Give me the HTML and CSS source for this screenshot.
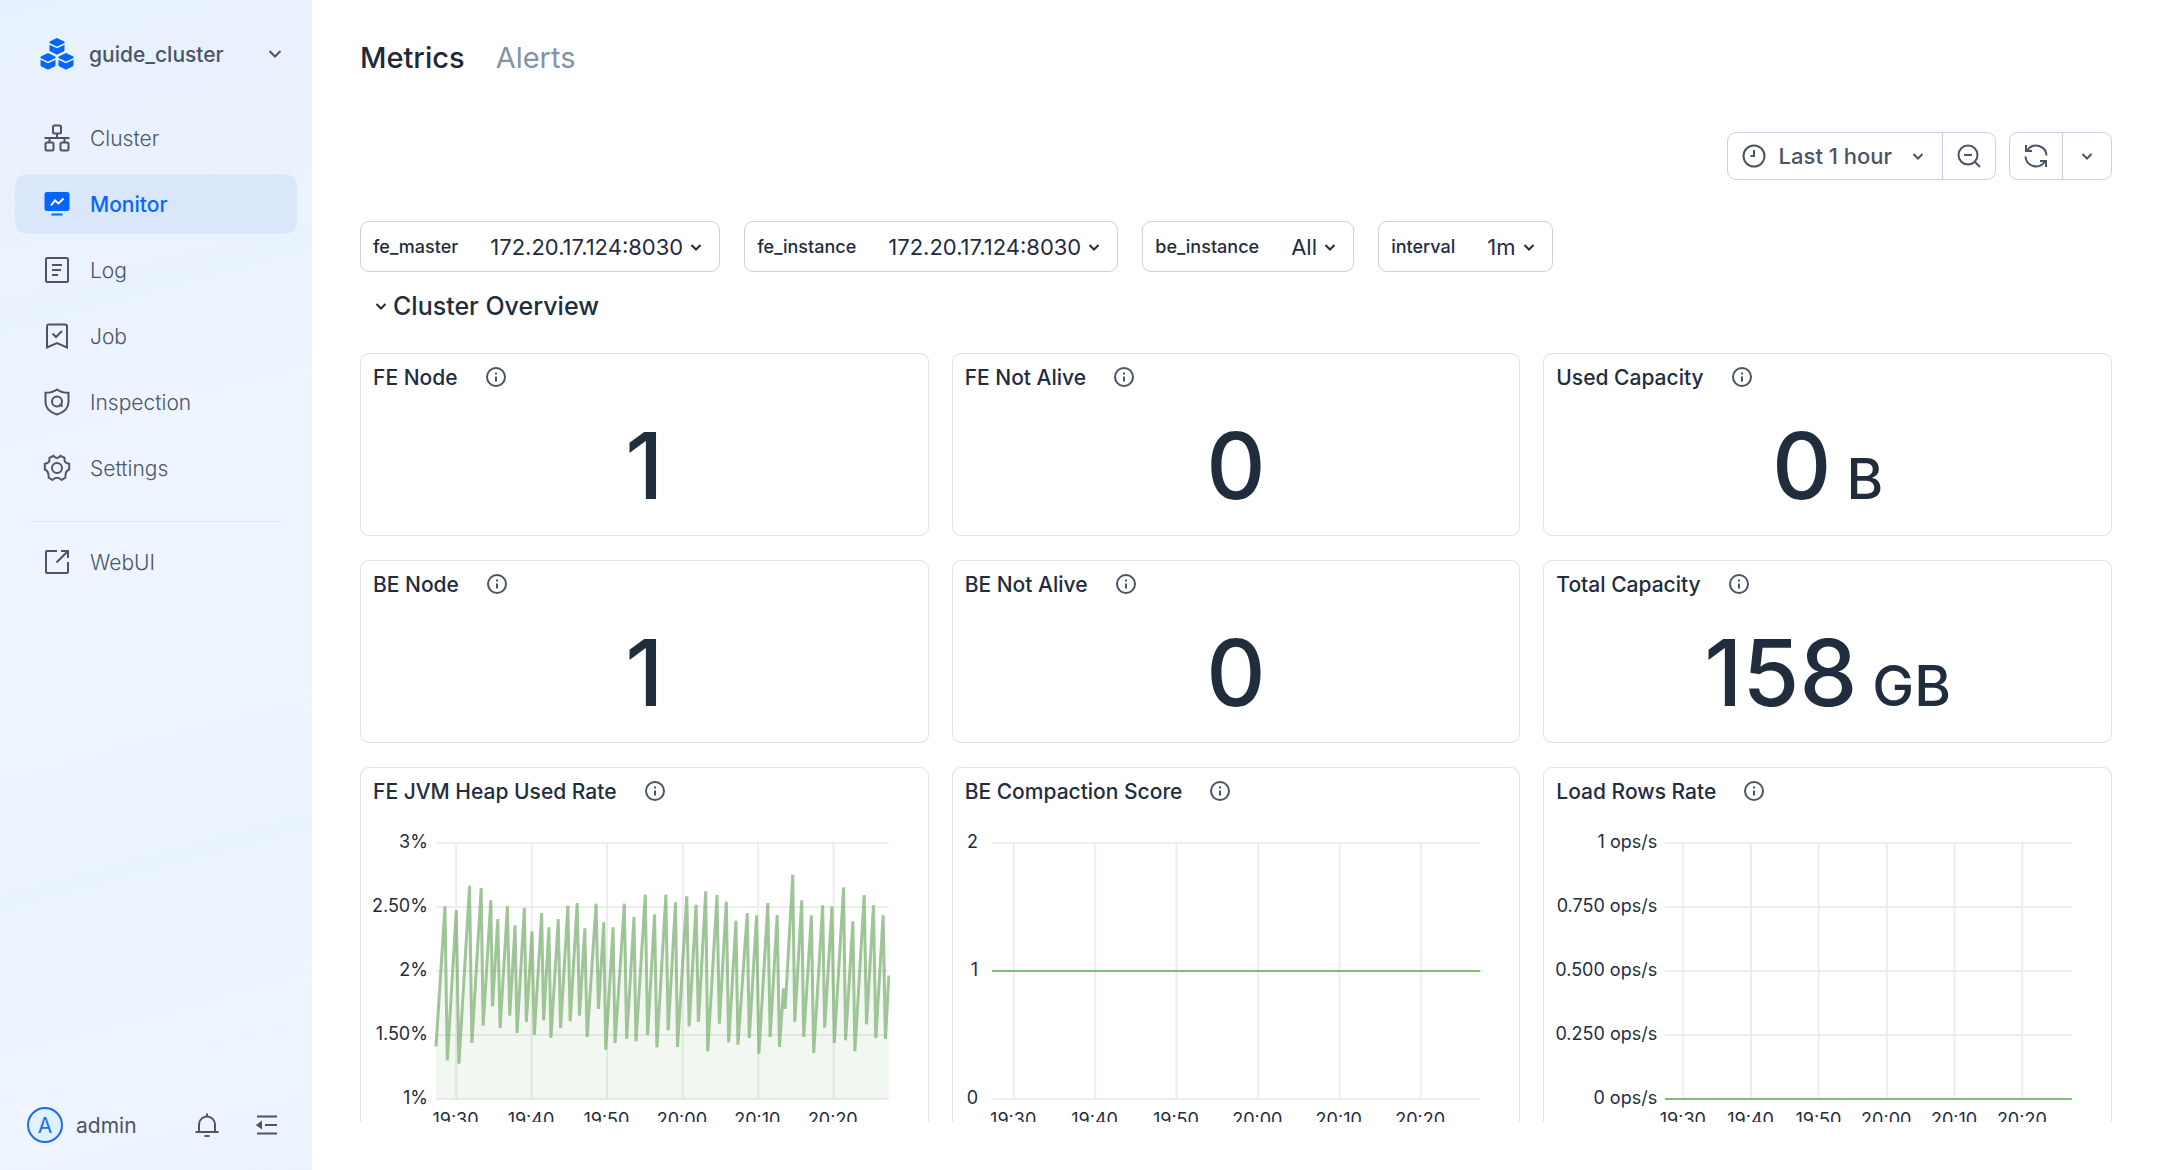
FILE: index.html
```html
<!DOCTYPE html>
<html lang="en">
    <head>
        <meta charset="utf-8">
        <meta name="viewport" content="width=device-width"/>
        <title>Metrics</title>
        <link rel="stylesheet" href="styles.css">
    </head>
    <body>
        <!-- shared icons -->
        <svg class="sprite" aria-hidden="true">
            <symbol id="down" viewBox="0 0 12 12"><path d="M1.5 4L6 8.5L10.5 4"/></symbol>
            <symbol id="info" viewBox="0 0 20 20">
                <circle cx="10" cy="10" r="9"/>
                <path d="M10 9.5v5M10 5.5v2"/>
            </symbol>
        </svg>

        <aside class="sidebar">
            <button class="cluster-switch" type="button">
                <svg class="logo" viewBox="0 0 34 32">
                    <g id="cube">
                        <path d="M17 0L23.8 3.3Q24.5 3.7 24.5 4.500V12Q24.5 12.800 23.8 13.200L17 16.800L10.2 13.200Q9.5 12.800 9.5 12V4.500Q9.5 3.700 10.2 3.300Z"/>
                        <path class="edge" d="M9 5.800L17 9.400L25 5.800"/>
                    </g>
                    <use href="#cube" x="-9" y="15"/>
                    <use href="#cube" x="9" y="15"/>
                </svg>
                <span>guide_cluster</span>
                <svg class="icon switch-arrow" viewBox="0 0 14 14"><path d="M1.5 4L7 9.5L12.5 4"/></svg>
            </button>

            <nav class="menu">
                <a class="menu-item" href="#cluster">
                    <svg class="icon" viewBox="0 0 28 28"><rect x="10" y="1.5" width="8" height="8" rx="1.5"/><rect x="2.5" y="18.5" width="8" height="8" rx="1.5"/><rect x="17.5" y="18.5" width="8" height="8" rx="1.5"/><path d="M14 9.5v4.500M1.500 14h25M6.500 14v4.500M21.500 14v4.500"/></svg>
                    Cluster
                </a>
                <a class="menu-item active" href="#monitor" aria-current="page">
                    <svg class="icon" viewBox="0 0 28 28"><rect class="solid" x="2.500" y="3" width="23" height="17" rx="1.500"/><path class="edge" d="M8 15.500L12 10.500L15.500 13.500L20.500 8.500"/><path d="M8.500 24.500h11"/></svg>
                    Monitor
                </a>
                <a class="menu-item" href="#log">
                    <svg class="icon" viewBox="0 0 28 28"><rect x="3" y="2" width="22" height="24" rx="1.500"/><path d="M9 9h10M9 14h9M9 19h6"/></svg>
                    Log
                </a>
                <a class="menu-item" href="#job">
                    <svg class="icon" viewBox="0 0 28 28"><path d="M4 25.500V4.500Q4 2.500 6 2.500H22Q24 2.500 24 4.500V25.500L14 21Z"/><path d="M9.500 11.500L13 15L19 9"/></svg>
                    Job
                </a>
                <a class="menu-item" href="#inspection">
                    <svg class="icon" viewBox="0 0 28 28"><path d="M14 1.500C17 3.800 21 4.800 25.500 4.800V14C25.500 20 20.500 24.500 14 26.500C7.500 24.500 2.500 20 2.500 14V4.800C7 4.800 11 3.800 14 1.500Z"/><circle cx="14" cy="13.500" r="5"/><path d="M16.500 16L19.500 18.500"/></svg>
                    Inspection
                </a>
                <a class="menu-item" href="#settings">
                    <svg class="icon" viewBox="0 0 28 28"><path d="M10.500 1.800Q12 4 14 4T17.500 1.800L21.500 3.800Q21.200 6.600 22.200 8T26.200 9.800V15.500Q24.400 15.900 23.300 18T22.300 23.600L18.500 26Q16.800 23.800 14 23.800T9.500 26L5.700 23.600Q5.800 20 4.700 18T1.800 15.500V9.800Q4.800 9.400 5.800 8T6.500 3.800Z"/><circle cx="14" cy="14" r="5"/></svg>
                    Settings
                </a>
                <hr class="menu-line">
                <a class="menu-item" href="#webui">
                    <svg class="icon" viewBox="0 0 28 28"><path d="M14 3H4Q3 3 3 4V24Q3 25 4 25H24Q25 25 25 24V14"/><path d="M18 3h7v7M25 3L13.500 14.500"/></svg>
                    WebUI
                </a>
            </nav>

            <div class="user-bar">
                <span class="avatar">A</span>
                <span class="user-name">admin</span>
                <button type="button" aria-label="Notifications">
                    <svg class="icon" viewBox="0 0 26 26"><path d="M5 20V12.500A8 8 0 0 1 21 12.500V20M1.500 20H24.500M13 1.500V4.500M10.500 24h5"/></svg>
                </button>
                <button type="button" aria-label="Collapse menu">
                    <svg class="icon" viewBox="0 0 26 26"><path d="M3 4.500H23M11 13H23M3 21.500H23"/><path class="solid" d="M3.500 13L7 10.500V15.500Z"/></svg>
                </button>
            </div>
        </aside>

        <main class="main">
            <nav class="tabs">
                <a class="tab active" href="#metrics" aria-current="page">Metrics</a>
                <a class="tab" href="#alerts">Alerts</a>
            </nav>

            <div class="toolbar">
                <div class="button-group">
                    <button type="button">
                        <svg class="icon" viewBox="0 0 24 24"><circle cx="12" cy="12" r="10.500"/><path d="M12 6v6H8.500"/></svg>
                        <span>Last 1 hour</span>
                        <svg class="icon arrow"><use href="#down"/></svg>
                    </button>
                    <button type="button" aria-label="Zoom out">
                        <svg class="icon" viewBox="0 0 24 24"><circle cx="11" cy="11" r="9.500"/><path d="M7 11h8M18 18L23 23"/></svg>
                    </button>
                </div>
                <div class="button-group">
                    <button type="button" aria-label="Refresh">
                        <svg class="icon" viewBox="0 0 24 24"><path d="M22.500 11.500A10.500 10.500 0 0 0 3.500 6M2 1v6h6M1.500 12.500A10.500 10.500 0 0 0 20.500 18M22 23v-6h-6"/></svg>
                    </button>
                    <button type="button" aria-label="Refresh interval">
                        <svg class="icon arrow"><use href="#down"/></svg>
                    </button>
                </div>
            </div>

            <form class="filters">
                <div class="filter">
                    <label for="fe_master">fe_master</label>
                    <select id="fe_master"><option>172.20.17.124:8030</option></select>
                    <svg class="icon arrow"><use href="#down"/></svg>
                </div>
                <div class="filter">
                    <label for="fe_instance">fe_instance</label>
                    <select id="fe_instance"><option>172.20.17.124:8030</option></select>
                    <svg class="icon arrow"><use href="#down"/></svg>
                </div>
                <div class="filter">
                    <label for="be_instance">be_instance</label>
                    <select id="be_instance"><option>All</option></select>
                    <svg class="icon arrow"><use href="#down"/></svg>
                </div>
                <div class="filter">
                    <label for="interval">interval</label>
                    <select id="interval"><option>1m</option></select>
                    <svg class="icon arrow"><use href="#down"/></svg>
                </div>
            </form>

            <h2 class="section-title">
                <button type="button">
                    <svg class="icon arrow"><use href="#down"/></svg>
                    Cluster Overview
                </button>
            </h2>

            <div class="panels">
                <section class="panel">
                    <h3>FE Node <svg class="icon info"><use href="#info"/></svg></h3>
                    <p class="value">1</p>
                </section>
                <section class="panel">
                    <h3>FE Not Alive <svg class="icon info"><use href="#info"/></svg></h3>
                    <p class="value">0</p>
                </section>
                <section class="panel">
                    <h3>Used Capacity <svg class="icon info"><use href="#info"/></svg></h3>
                    <p class="value">0<small>B</small></p>
                </section>
                <section class="panel">
                    <h3>BE Node <svg class="icon info"><use href="#info"/></svg></h3>
                    <p class="value">1</p>
                </section>
                <section class="panel">
                    <h3>BE Not Alive <svg class="icon info"><use href="#info"/></svg></h3>
                    <p class="value">0</p>
                </section>
                <section class="panel">
                    <h3>Total Capacity <svg class="icon info"><use href="#info"/></svg></h3>
                    <p class="value">158<small>GB</small></p>
                </section>

                <section class="panel">
                    <h3>FE JVM Heap Used Rate <svg class="icon info"><use href="#info"/></svg></h3>
                    <div class="chart">
                        <div class="y-axis"><span>3%</span><span>2.50%</span><span>2%</span><span>1.50%</span><span>1%</span></div>
                        <svg class="plot" viewBox="0 0 1363 768" preserveAspectRatio="none">
                            <path class="grid" d="M0 0H1363M0 192H1363M0 384H1363M0 576H1363M0 768H1363M61 0V768M288 0V768M515 0V768M743 0V768M970 0V768M1197 0V768"/>
                            <path class="area" d="M0 768L0 610L27 190L34 652L61 202L69 662L101 128L108 600L136 135L142 548L165 172L170 490L186 228L193 555L215 190L222 518L238 247L244 570L266 195L272 537L289 265L296 576L318 210L324 532L340 253L346 585L368 228L375 555L397 188L404 535L425 180L432 518L448 256L455 582L482 182L489 498L505 238L511 620L533 253L539 600L567 182L574 588L596 222L602 595L630 155L637 576L658 214L665 613L692 155L699 562L721 178L727 612L755 160L762 550L783 185L790 537L812 145L818 625L846 156L853 542L874 176L881 598L903 233L909 605L937 210L943 585L965 217L972 632L999 180L1006 582L1027 216L1034 612L1046 436L1051 498L1074 95L1080 536L1101 172L1107 582L1130 217L1137 630L1164 187L1170 554L1192 190L1199 600L1227 133L1233 592L1255 235L1261 625L1289 156L1296 544L1317 187L1324 585L1346 217L1353 588L1363 398V768Z"/>
                            <path class="line" d="M0 610L27 190L34 652L61 202L69 662L101 128L108 600L136 135L142 548L165 172L170 490L186 228L193 555L215 190L222 518L238 247L244 570L266 195L272 537L289 265L296 576L318 210L324 532L340 253L346 585L368 228L375 555L397 188L404 535L425 180L432 518L448 256L455 582L482 182L489 498L505 238L511 620L533 253L539 600L567 182L574 588L596 222L602 595L630 155L637 576L658 214L665 613L692 155L699 562L721 178L727 612L755 160L762 550L783 185L790 537L812 145L818 625L846 156L853 542L874 176L881 598L903 233L909 605L937 210L943 585L965 217L972 632L999 180L1006 582L1027 216L1034 612L1046 436L1051 498L1074 95L1080 536L1101 172L1107 582L1130 217L1137 630L1164 187L1170 554L1192 190L1199 600L1227 133L1233 592L1255 235L1261 625L1289 156L1296 544L1317 187L1324 585L1346 217L1353 588L1363 398"/>
                        </svg>
                        <div class="x-axis"><span>19:30</span><span>19:40</span><span>19:50</span><span>20:00</span><span>20:10</span><span>20:20</span></div>
                    </div>
                </section>
                <section class="panel">
                    <h3>BE Compaction Score <svg class="icon info"><use href="#info"/></svg></h3>
                    <div class="chart">
                        <div class="y-axis short"><span>2</span><span>1</span><span>0</span></div>
                        <svg class="plot" viewBox="0 0 1363 768" preserveAspectRatio="none">
                            <path class="grid" d="M0 0H1363M0 384H1363M0 768H1363M61 0V768M288 0V768M515 0V768M743 0V768M970 0V768M1197 0V768"/>
                            <path class="line flat" d="M0 384H1363"/>
                        </svg>
                        <div class="x-axis"><span>19:30</span><span>19:40</span><span>19:50</span><span>20:00</span><span>20:10</span><span>20:20</span></div>
                    </div>
                </section>
                <section class="panel">
                    <h3>Load Rows Rate <svg class="icon info"><use href="#info"/></svg></h3>
                    <div class="chart">
                        <div class="y-axis"><span>1 ops/s</span><span>0.750 ops/s</span><span>0.500 ops/s</span><span>0.250 ops/s</span><span>0 ops/s</span></div>
                        <svg class="plot" viewBox="0 0 1363 768" preserveAspectRatio="none">
                            <path class="grid" d="M0 0H1363M0 192H1363M0 384H1363M0 576H1363M0 768H1363M61 0V768M288 0V768M515 0V768M743 0V768M970 0V768M1197 0V768"/>
                            <path class="line flat" d="M0 768H1363"/>
                        </svg>
                        <div class="x-axis"><span>19:30</span><span>19:40</span><span>19:50</span><span>20:00</span><span>20:10</span><span>20:20</span></div>
                    </div>
                </section>
            </div>
        </main>
    </body>
</html>
```

FILE: styles.css
```css
* {
    box-sizing: border-box;
}
body {
    display: flex;
    height: 100vh;
    margin: 0;
    background: #fff;
    color: #1f2d3d;
    font-family: Inter, "Liberation Sans", sans-serif;
    font-size: 22px;
}
h2, h3, p {
    margin: 0;
}
a {
    color: inherit;
    text-decoration: none;
}
button, select {
    padding: 0;
    border: 0;
    background: none;
    color: inherit;
    font: inherit;
    cursor: pointer;
}
.sprite {
    position: absolute;
    width: 0;
    height: 0;
}
.icon {
    flex: none;
    width: 28px;
    height: 28px;
    fill: none;
    stroke: currentColor;
    stroke-width: 2;
    overflow: visible;
}
.icon .solid {
    fill: currentColor;
}
.arrow {
    width: 12px;
    height: 12px;
}

/* sidebar */
.sidebar {
    display: flex;
    flex: none;
    flex-direction: column;
    width: 312px;
    background: linear-gradient(165deg, #e7f1fe 0%, #eaf2fd 18%, #e9f3fe 26%, #eff5ff 40%, #eff5ff 58%, #e9f3fe 72%, #eff5ff 90%, #eaf3fd 100%);
    color: #4b5565;
    font-size: 21px;
}
.cluster-switch {
    display: flex;
    align-items: center;
    gap: 15px;
    height: 108px;
    padding: 0 30px 0 40px;
    font-weight: 500;
    text-align: left;
}
.cluster-switch span {
    flex: 1;
}
.logo {
    width: 34px;
    height: 32px;
    fill: #0565ff;
}
.logo .edge {
    fill: none;
    stroke: #eaf2fd;
    stroke-width: 1.5;
}
.switch-arrow {
    width: 14px;
    height: 14px;
}
.menu {
    display: flex;
    flex: 1;
    flex-direction: column;
    gap: 6px;
    padding: 0 15px;
    font-weight: 300;
}
.menu-item {
    display: flex;
    align-items: center;
    gap: 19px;
    height: 60px;
    padding-left: 28px;
    border-radius: 12px;
}
.menu-item.active {
    background: #dae7fa;
    color: #0565ff;
    font-weight: 500;
}
.menu-item .edge {
    stroke: #fff;
}
.menu-line {
    width: 252px;
    margin: 17px auto 4px;
    border: 0;
    border-top: 1px solid #e0e6f0;
}
.user-bar {
    display: flex;
    align-items: center;
    gap: 13px;
    height: 90px;
    padding: 0 32px 0 27px;
}
.user-bar .icon {
    display: block;
    width: 26px;
    height: 26px;
}
.user-bar button + button {
    margin-left: 21px;
}
.avatar {
    display: flex;
    align-items: center;
    justify-content: center;
    width: 36px;
    height: 36px;
    border: 2px solid #1f6bf0;
    border-radius: 50%;
    background: #e0f1ff;
    color: #1f6bf0;
}
.user-name {
    flex: 1;
}

/* content */
.main {
    display: flex;
    flex: 1;
    flex-direction: column;
    min-width: 0;
    padding: 36px 48px 48px;
}
.tabs {
    display: flex;
    gap: 31px;
    height: 96px;
    font-size: 29px;
    line-height: 44px;
}
.tab {
    color: #8592a6;
}
.tab.active {
    color: #1f2937;
    font-weight: 500;
}
.toolbar {
    display: flex;
    justify-content: flex-end;
    gap: 13px;
    margin-bottom: 41px;
    color: #4a5465;
    font-weight: 500;
}
.button-group {
    display: flex;
    height: 48px;
    border: 1px solid #c8d1e3;
    border-radius: 9px;
}
.button-group button {
    display: flex;
    align-items: center;
    padding: 0 14px;
}
.button-group button + button {
    border-left: 1px solid #c8d1e3;
}
.button-group span {
    padding: 0 16px 0 13px;
}
.button-group .icon {
    width: 24px;
    height: 24px;
}
.button-group .arrow {
    width: 12px;
    height: 12px;
    margin: 0 4px;
}
.filters {
    display: flex;
    gap: 24px;
}
.filter {
    display: flex;
    align-items: center;
    height: 51px;
    padding: 0 17px 0 12px;
    border: 1px solid #c9d3df;
    border-radius: 9px;
}
.filter label {
    margin-right: 32px;
    font-size: 18px;
    font-weight: 500;
}
.filter select {
    margin-right: 7px;
    appearance: none;
}
.section-title {
    height: 81px;
    padding: 16px 0 0 15px;
    font-size: 25px;
    font-weight: 500;
    line-height: 36px;
}
.section-title button {
    display: flex;
    align-items: center;
    gap: 6px;
}
.panels {
    display: grid;
    flex: 1;
    grid-template-columns: repeat(3, 1fr);
    grid-template-rows: 183px 183px 384px;
    gap: 24px 23px;
    min-height: 0;
    overflow: hidden;
}
.panel {
    display: flex;
    flex-direction: column;
    border: 1px solid #dce2e7;
    border-radius: 9px;
}
.panel h3 {
    display: flex;
    flex: none;
    align-items: center;
    gap: 28px;
    height: 46px;
    padding-left: 12px;
    font-size: 21px;
    font-weight: 500;
}
.info {
    width: 20px;
    height: 20px;
    color: #4a5465;
}
.value {
    display: flex;
    align-items: baseline;
    justify-content: center;
    gap: 15px;
    font-size: 92px;
    font-weight: 500;
    line-height: 132px;
}
.value small {
    font-size: 56px;
    line-height: 56px;
}

/* charts: labels keep their size, the plot stretches */
.chart {
    display: grid;
    grid-template-columns: auto 1fr;
    grid-template-rows: 256px 40px;
    padding: 29px 39px 0 0;
    font-size: 18px;
    line-height: 20px;
}
.y-axis {
    display: flex;
    flex-direction: column;
    justify-content: space-between;
    margin: -11px 0 -9px;
    padding: 0 8px 0 11px;
    text-align: right;
}
.y-axis.short {
    padding: 0 14px;
}
.plot {
    width: 100%;
    height: 256px;
    overflow: visible;
}
.plot path {
    fill: none;
    vector-effect: non-scaling-stroke;
}
.plot .grid {
    stroke: #ededed;
    stroke-width: 2;
}
.plot .area {
    fill: #56a64b;
    fill-opacity: .08;
}
.plot .line {
    stroke: #6fa862;
    stroke-opacity: .65;
    stroke-width: 3;
}
.plot .flat {
    stroke-opacity: .8;
    stroke-width: 2;
}
/* ticks are 10 minutes apart, a sixth of the hour */
.x-axis {
    display: grid;
    grid-column: 2;
    grid-template-columns: repeat(6, 1fr);
    margin: 11px 4% 0 -4%;
    text-align: center;
}
```
